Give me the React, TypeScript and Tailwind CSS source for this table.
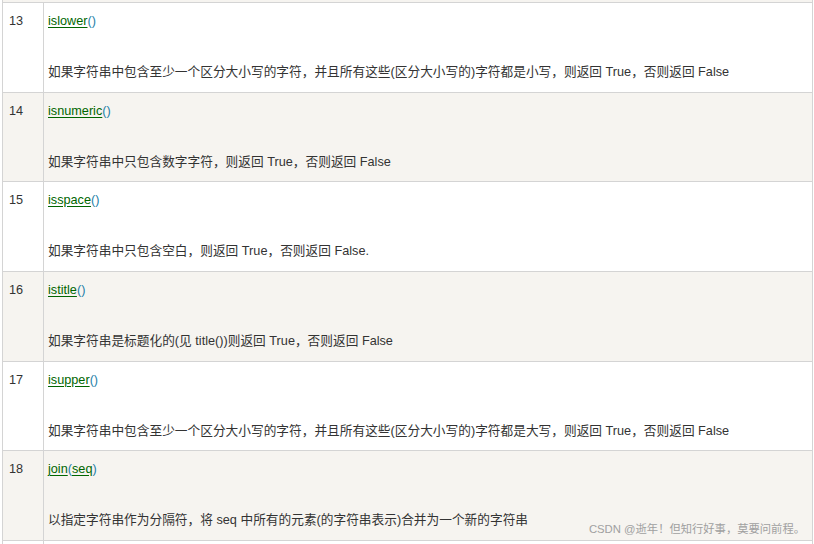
type Part = { text: string; link?: boolean };

type Row = {
  num: number;
  name: Part[];
  desc: string;
  height: string;
  shaded: boolean;
};

const rows: Row[] = [
  {
    num: 13,
    name: [{ text: "islower", link: true }, { text: "()" }],
    desc: "如果字符串中包含至少一个区分大小写的字符，并且所有这些(区分大小写的)字符都是小写，则返回 True，否则返回 False",
    height: "h-[90px]",
    shaded: false,
  },
  {
    num: 14,
    name: [{ text: "isnumeric", link: true }, { text: "()" }],
    desc: "如果字符串中只包含数字字符，则返回 True，否则返回 False",
    height: "h-[89px]",
    shaded: true,
  },
  {
    num: 15,
    name: [{ text: "isspace", link: true }, { text: "()" }],
    desc: "如果字符串中只包含空白，则返回 True，否则返回 False.",
    height: "h-[90px]",
    shaded: false,
  },
  {
    num: 16,
    name: [{ text: "istitle", link: true }, { text: "()" }],
    desc: "如果字符串是标题化的(见 title())则返回 True，否则返回 False",
    height: "h-[90px]",
    shaded: true,
  },
  {
    num: 17,
    name: [{ text: "isupper", link: true }, { text: "()" }],
    desc: "如果字符串中包含至少一个区分大小写的字符，并且所有这些(区分大小写的)字符都是大写，则返回 True，否则返回 False",
    height: "h-[89px]",
    shaded: false,
  },
  {
    num: 18,
    name: [
      { text: "join", link: true },
      { text: "(" },
      { text: "seq", link: true },
      { text: ")" },
    ],
    desc: "以指定字符串作为分隔符，将 seq 中所有的元素(的字符串表示)合并为一个新的字符串",
    height: "h-[90px]",
    shaded: true,
  },
];

function TableRow({ row }: { row: Row }) {
  return (
    <div
      className={`flex border-b border-[#d4d4d4] ${row.height} ${
        row.shaded ? "bg-[#f6f4f0]" : "bg-white"
      }`}
    >
      <div className="w-[41px] shrink-0 border-r border-[#d4d4d4] pl-[6px] pt-[10px] leading-[17px]">
        {row.num}
      </div>
      <div className="flex-1 pl-[4px] pt-[10px]">
        <div className="leading-[17px]">
          {row.name.map((p, i) =>
            p.link ? (
              <a key={i} className="text-[#006600] underline underline-offset-2">
                {p.text}
              </a>
            ) : (
              <span key={i} className="text-[#1e7fa8]">
                {p.text}
              </span>
            )
          )}
        </div>
        <div className="mt-[34px] leading-[17px]">{row.desc}</div>
      </div>
    </div>
  );
}

export default function App() {
  return (
    <div
      className="relative h-[544px] w-[814px] overflow-hidden bg-white text-[12.7px] text-[#333]"
      style={{ fontFamily: '"Liberation Sans", Arial, "Noto Sans CJK SC", sans-serif' }}
    >
      <div className="ml-[2px] w-[811px]">
        <div className="h-[2px] border-x border-[#d4d4d4] bg-[#f6f4f0]" />
        <div className="border-x border-t border-[#d4d4d4]">
          {rows.map((r) => (
            <TableRow key={r.num} row={r} />
          ))}
          <div className="flex h-[10px] bg-white">
            <div className="w-[41px] border-r border-[#d4d4d4]" />
          </div>
        </div>
      </div>
      <div className="absolute bottom-[6px] right-[9px] text-[11.3px] text-[#a0a0a0]">
        CSDN @逝年！但知行好事，莫要问前程。
      </div>
    </div>
  );
}
